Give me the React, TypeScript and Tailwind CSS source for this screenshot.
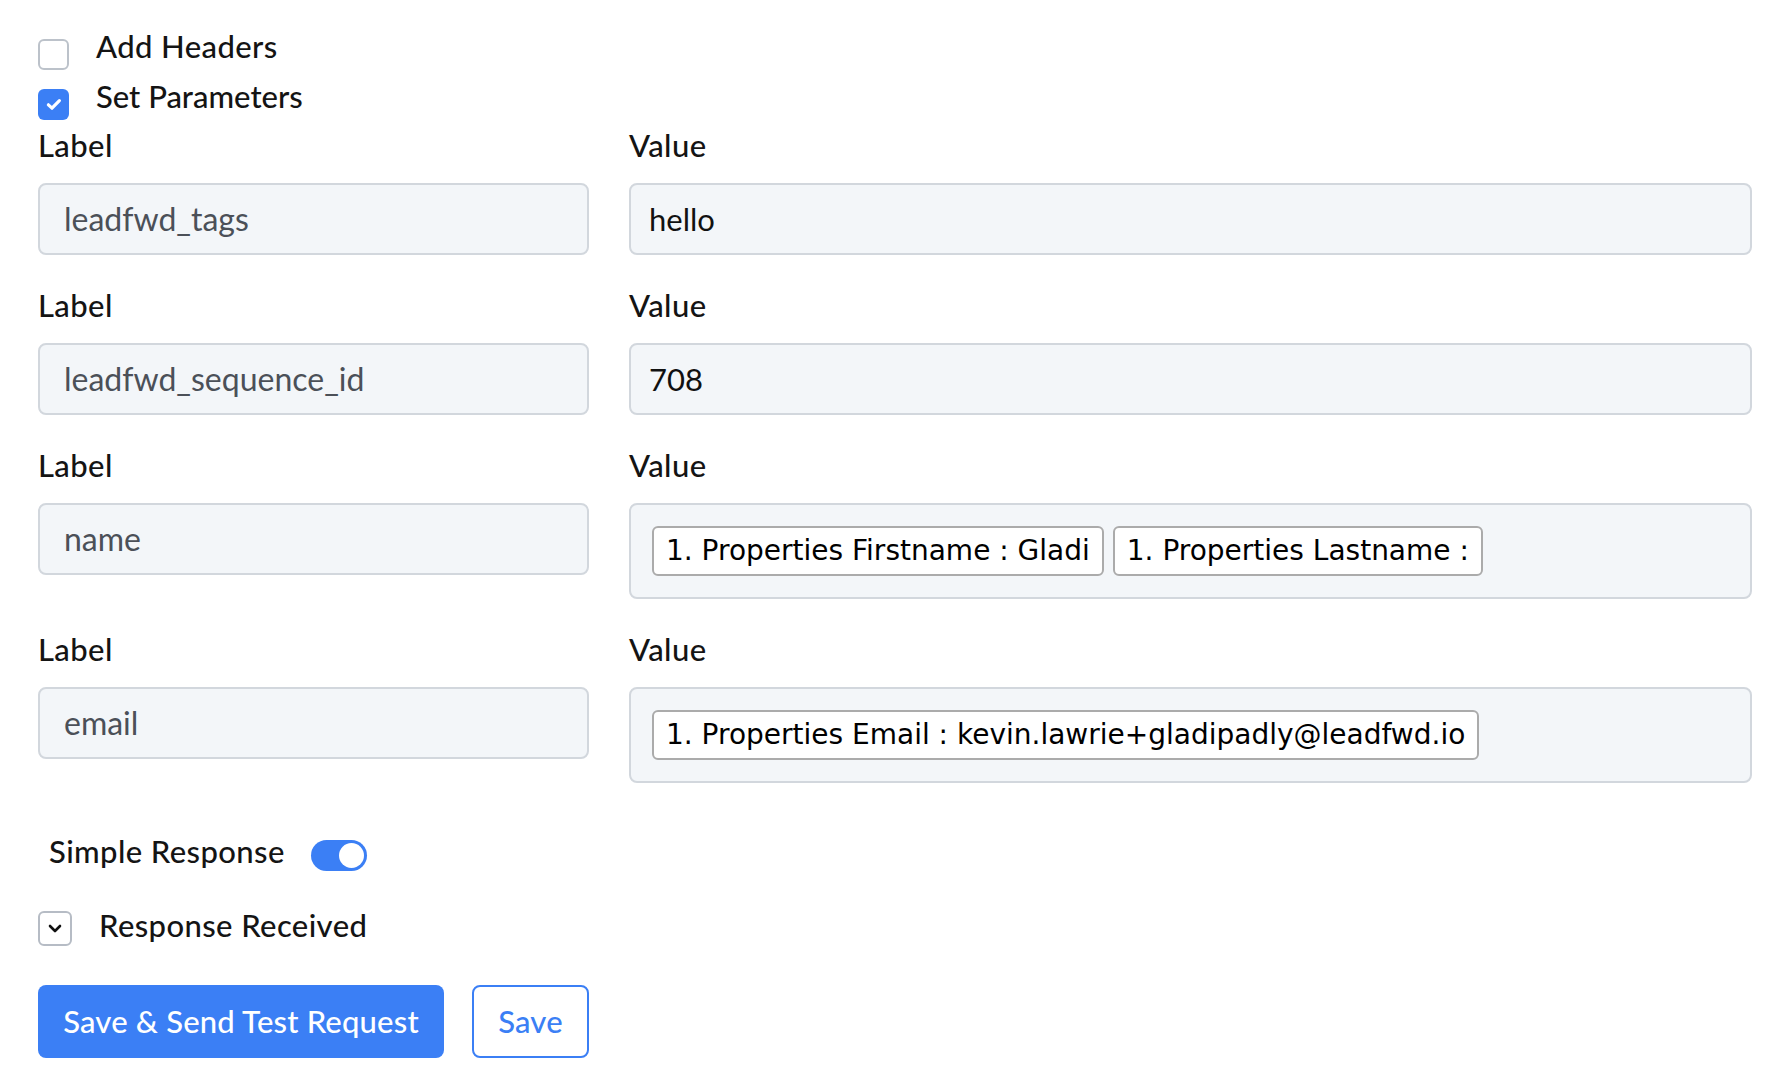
import React from "react";

const Checkbox = ({ checked }: { checked: boolean }) =>
  checked ? (
    <div className="mt-[11px] flex h-[31px] w-[31px] shrink-0 items-center justify-center rounded-[6px] bg-[#3b7ff5]">
      <svg width="16" height="13" viewBox="0 0 16 13" fill="none">
        <path d="M2.4 6.8 L6 10.2 L13.4 2.6" stroke="white" strokeWidth="3.2" strokeLinecap="round" strokeLinejoin="round" />
      </svg>
    </div>
  ) : (
    <div className="mt-[11px] h-[31px] w-[31px] shrink-0 rounded-[6px] border-2 border-[#bcc2ca] bg-white" />
  );

const Chip = ({ text }: { text: string }) => (
  <div className="flex h-[50px] items-center rounded-[6px] border-2 border-[#ababab] bg-white px-[12px] font-['DejaVu_Sans',sans-serif] text-[28px] leading-none whitespace-nowrap text-black">
    {text}
  </div>
);

type Row = { label: string; value?: string; chips?: string[] };

const rows: Row[] = [
  { label: "leadfwd_tags", value: "hello" },
  { label: "leadfwd_sequence_id", value: "708" },
  { label: "name", chips: ["1. Properties Firstname : Gladi", "1. Properties Lastname :"] },
  { label: "email", chips: ["1. Properties Email : kevin.lawrie+gladipadly@leadfwd.io"] },
];

const head = "text-[31px] font-medium leading-[36px] tracking-[0.4px]";

export default function App() {
  return (
    <div className="min-h-screen bg-white pl-[38px] pr-[34px] pt-[28px] font-['Lato',sans-serif] text-[#141414]">
      <div className="flex items-start gap-[27px]">
        <Checkbox checked={false} />
        <span className={head}>Add Headers</span>
      </div>
      <div className="mt-[8px] flex items-start gap-[27px]">
        <Checkbox checked={true} />
        <span className={`${head} tracking-[0px]`}>Set Parameters</span>
      </div>

      {rows.map((r, i) => (
        <div key={i} className={`grid grid-cols-[551px_1fr] gap-x-[40px] ${i === 0 ? "mt-[7px]" : "mt-[32px]"}`}>
          <div>
            <div className={head}>Label</div>
            <div className="mt-[20px] flex h-[72px] items-center rounded-[8px] border-2 border-[#d2d7dd] bg-[#f3f6f9] px-[24px] text-[32px] text-[#4b5058]">
              {r.label}
            </div>
          </div>
          <div>
            <div className={head}>Value</div>
            {r.chips ? (
              <div className="mt-[20px] flex items-center gap-[9px] rounded-[8px] border-2 border-[#d2d7dd] bg-[#f3f6f9] px-[21px] py-[21px]">
                {r.chips.map((c, j) => (
                  <Chip key={j} text={c} />
                ))}
              </div>
            ) : (
              <div className="mt-[20px] flex h-[72px] items-center rounded-[8px] border-2 border-[#d2d7dd] bg-[#f3f6f9] px-[18px] text-[31px] text-[#111]">
                {r.value}
              </div>
            )}
          </div>
        </div>
      ))}

      <div className="mt-[50px] flex items-start pl-[11px]">
        <span className={head}>Simple Response</span>
        <div className="ml-[26px] mt-[7px] flex h-[31px] w-[56px] items-center justify-end rounded-full bg-[#3b7ff5] pr-[3px]">
          <div className="h-[25px] w-[25px] rounded-full bg-white" />
        </div>
      </div>

      <div className="mt-[36px] flex items-start">
        <div className="mt-[4px] flex h-[35px] w-[34px] items-center justify-center rounded-[6px] border-2 border-[#b6bcc5] bg-white">
          <svg width="14" height="9" viewBox="0 0 14 9" fill="none">
            <path d="M2 2 L7 7 L12 2" stroke="#111" strokeWidth="2.6" strokeLinecap="round" strokeLinejoin="round" />
          </svg>
        </div>
        <span className={`ml-[27px] ${head} tracking-[0.3px]`}>Response Received</span>
      </div>

      <div className="mt-[39px] flex items-center gap-[28px]">
        <button className="flex h-[73px] w-[406px] items-center justify-center rounded-[8px] bg-[#3b7ff5] text-[31px] font-medium tracking-[0.2px] text-white">
          Save &amp; Send Test Request
        </button>
        <button className="flex h-[73px] w-[117px] items-center justify-center rounded-[8px] border-2 border-[#3b7ff5] bg-white text-[31px] font-medium tracking-[0.2px] text-[#3b7ff5]">
          Save
        </button>
      </div>
    </div>
  );
}
